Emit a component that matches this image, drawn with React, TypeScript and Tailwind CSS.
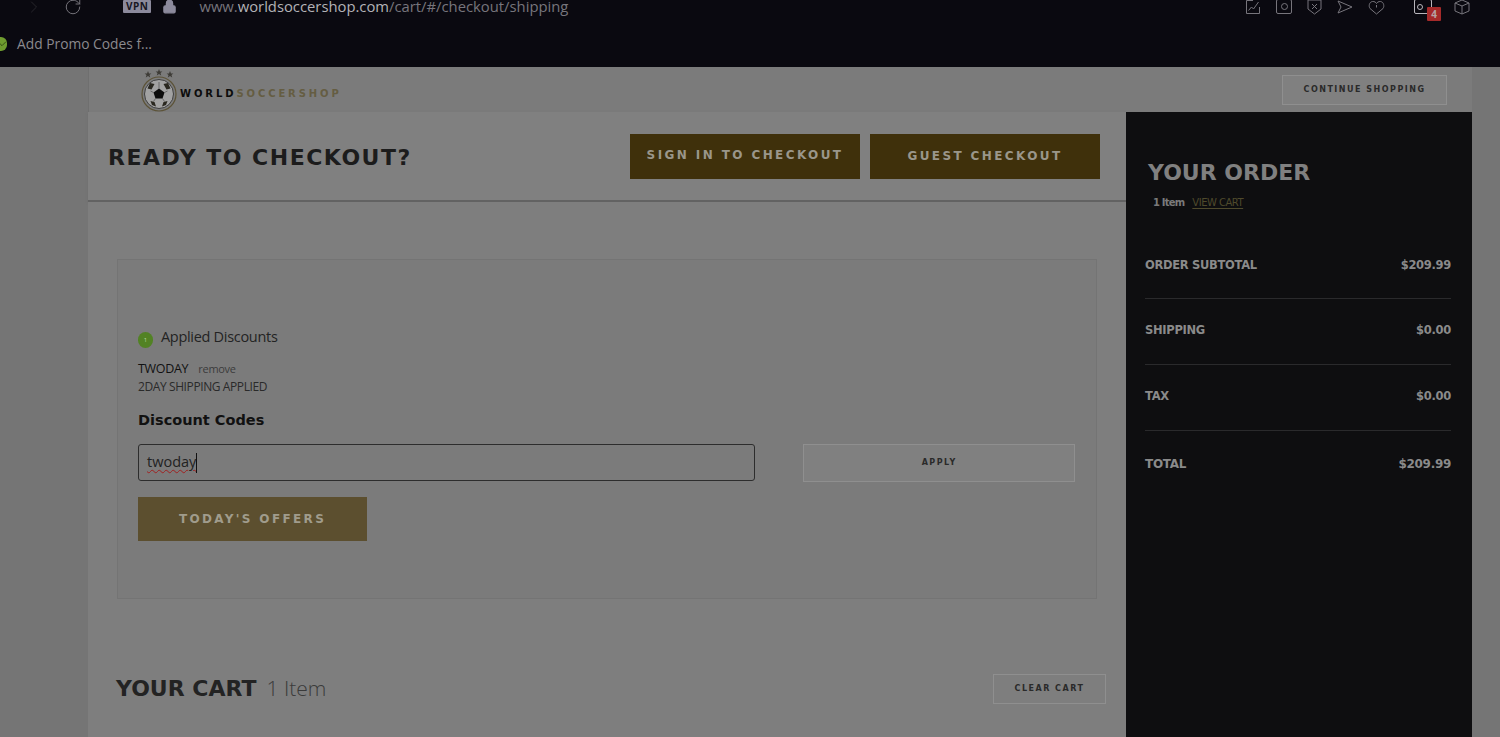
import { RotateCw, ChevronRight, Lock, Check } from "lucide-react";

const heading = "font-['DejaVu_Sans','Liberation_Sans',sans-serif]";

function Logo() {
  return (
    <svg width="38" height="44" viewBox="0 0 38 44" className="shrink-0">
      <g fill="#3d3b36">
        <path d="M7 3l1 2.400 2.400.2-1.900 1.500.7 2.400-2.200-1.400-2.200 1.400.7-2.400-1.900-1.500 2.400-.2z" />
        <path d="M18 1l1 2.400 2.400.2-1.900 1.500.7 2.400-2.200-1.400-2.200 1.400.7-2.400-1.900-1.500 2.400-.2z" />
        <path d="M29 3l1 2.400 2.400.2-1.900 1.500.7 2.400-2.200-1.400-2.200 1.400.7-2.400-1.900-1.500 2.400-.2z" />
      </g>
      <circle cx="18" cy="26" r="17" fill="#7b7b7b" stroke="#5c5338" strokeWidth="1.200" />
      <circle cx="18" cy="26" r="14.500" fill="#a2a2a2" stroke="#2a2a2a" strokeWidth="0.8" />
      <path d="M18 20.500l5.500 4-2 6h-7l-2-6z" fill="#0d0d0d" />
      <path d="M9 15l4.500 1-3 5.500-4-1zM27 15l-4.500 1 3 5.500 4-1zM9.500 33l4 1 1.500 4.500-4-1.500zM26.500 33l-4 1-1.500 4.500 4-1.500z" fill="#2a2820" />
      <path d="M18 20.500V14M12.500 24.500l-3-1.500M23.500 24.500l3-1.500M14.500 30.500l-2 3M21.500 30.500l2 3" stroke="#444" strokeWidth="0.6" />
    </svg>
  );
}

function Row({ label, value, large }: { label: string; value: string; large?: boolean }) {
  return (
    <div className={`flex justify-between ${large ? "text-[12px]" : "text-[11.500px]"} leading-4 font-bold tracking-[-0.3px] text-[#8a8a8a]`}>
      <span>{label}</span>
      <span>{value}</span>
    </div>
  );
}

export default function App() {
  return (
    <div className="h-[737px] overflow-hidden bg-[#757575] font-['Open_Sans',sans-serif]">
      {/* browser chrome */}
      <div className="h-[67px] bg-[#0a0910]">
        <div className="flex items-center h-[13px] text-[#77757c]">
          <ChevronRight size={20} strokeWidth={1} className="ml-6 text-[#2c2b31]" />
          <RotateCw size={18} strokeWidth={1.300} className="ml-[20px] text-[#77757c]" />
          <span className="ml-[41px] bg-[#8c8a9c] text-[#17151f] text-[10px] font-bold leading-[13px] px-[3px] rounded-[1px] tracking-[0.5px]">VPN</span>
          <Lock size={15} className="ml-[11px] text-[#8c8a9c]" fill="#8c8a9c" />
          <span className="ml-[22px] text-[14.800px] leading-[13px] whitespace-nowrap">
            www.<span className="text-[#b3b2b6]">worldsoccershop.com</span>/cart/#/checkout/shipping
          </span>
          <div className="ml-auto flex items-center text-[#77757c]">
            <svg width="16" height="16" viewBox="0 0 16 16" fill="none" stroke="currentColor" className="mr-[15px]"><path d="M8 1.500H1.500v13h13V8M3.500 11.500l3-3.500 2 2 5-7" /></svg>
            <span className="w-4 h-[15px] border border-current rounded-[2px] mr-[15px] flex items-center justify-center"><span className="w-[7px] h-[7px] rounded-full border border-current" /></span>
            <svg width="15" height="16" viewBox="0 0 15 16" fill="none" stroke="currentColor" className="mr-[15px]"><path d="M1 1h13v9l-6.500 5L1 10zM5 5l5 5M10 5l-5 5" /></svg>
            <svg width="16" height="14" viewBox="0 0 16 14" fill="none" stroke="currentColor" className="mr-[15px]"><path d="M1 1l14 6-14 6 3-6z" /></svg>
            <svg width="17" height="16" viewBox="0 0 17 16" fill="none" stroke="currentColor" className="mr-[29px]"><path d="M8.500 15L2 9.500C.5 7.500 1 3 4.500 2.500 6.500 2.300 8 3.500 8.500 4.500 9 3.500 10.500 2.300 12.500 2.500 16 3 16.500 7.500 15 9.500zM8.500 6v2.500" /></svg>
            <span className="relative w-[18px] h-[15px] border border-[#b8b6bc] rounded-[2px] mr-[22px]">
              <span className="absolute left-[2px] top-[4px] w-[6px] h-[6px] rounded-full border border-[#b8b6bc]" />
              <span className="absolute left-3 top-[7px] w-[14px] h-[14px] bg-[#a52a2a] rounded-[1px] text-[10px] leading-[14px] font-bold text-center text-[#b5a5a5]">4</span>
            </span>
            <svg width="16" height="16" viewBox="0 0 16 16" fill="none" stroke="currentColor" className="mr-[30px]"><path d="M8 1l7 3v8l-7 3-7-3V4zM1 4l7 3 7-3M8 7v8" /></svg>
          </div>
        </div>
        <div className="flex items-center mt-[22px]">
          <span className="-ml-[5px] w-3 h-[14px] rounded-full bg-[#6f9c2f] flex items-center justify-center"><Check size={8} className="text-[#1b2a0a] ml-1" /></span>
          <span className="ml-[10px] text-[13.800px] leading-[18px] text-[#8b8a8e]">Add Promo Codes f...</span>
        </div>
      </div>

      <div className="flex pl-[88px] pr-[28px]">
        {/* main column */}
        <div className="w-[1038px]">
          <div className="h-[45px] bg-[#7b7b7b] border-l border-[#6f6f6f] flex items-center pl-[52px]">
            <Logo />
            <span className={`${heading} ml-[1px] mt-[8px] text-[10px] font-bold tracking-[2.900px] text-[#0c0c0c]`}>
              WORLD<span className="text-[#655d42]">SOCCERSHOP</span>
            </span>
          </div>

          <div className="h-[90px] bg-[#808080] border-b-2 border-[#626262] flex items-center pl-5 pr-[26px] shadow-[0_1px_2px_#6c6c6c]">
            <h1 className={`${heading} mt-[3px] text-[22px] font-bold tracking-[1.500px] text-[#1c1c1c]`}>READY TO CHECKOUT?</h1>
            <button className={`${heading} ml-auto w-[230px] h-[45px] pb-[2px] bg-[#3f300b] text-[12px] font-bold tracking-[2.400px] text-[#9a968a]`}>SIGN IN TO CHECKOUT</button>
            <button className={`${heading} ml-[10px] w-[230px] h-[45px] bg-[#3f300b] text-[12px] font-bold tracking-[2.400px] text-[#9a968a]`}>GUEST CHECKOUT</button>
          </div>

          <div className="h-[535px] bg-[#7e7e7e]">
            <div className="pt-[57px] pl-[29px] pr-[29px]">
              <div className="h-[340px] border border-[#747474] bg-[#7b7b7b] pl-5 pr-[21px] pt-[67px]">
                <div className="flex items-start">
                  <span className="mt-[5px] w-[15px] h-[16px] rounded-full bg-[#528224] text-[6px] leading-[16px] text-center text-[#b8d8a0]">1</span>
                  <span className="ml-2 text-[14.500px] leading-[20px] tracking-[-0.3px] text-[#232323]">Applied Discounts</span>
                </div>
                <div className="mt-[13px] flex items-center h-4 text-[12.500px] tracking-[-0.3px] text-[#111]">
                  TWODAY<span className="ml-[10px] text-[11px] text-[#3c3c3c]">remove</span>
                </div>
                <div className="mt-[2px] text-[12px] leading-4 tracking-[-0.4px] text-[#2a2a2a]">2DAY SHIPPING APPLIED</div>
                <h2 className={`${heading} mt-[15px] text-[14.500px] leading-5 font-bold text-[#111]`}>Discount Codes</h2>
                <div className="mt-[14px] flex">
                  <div className="w-[618px] h-[37px] border border-[#2d2d2d] rounded-[3px] pl-2 text-[14.500px] leading-[34px] text-[#222]">
                    <span className="underline decoration-wavy decoration-[#a02020] decoration-1 underline-offset-2">twoday</span>
                    <span className="inline-block w-px h-[20px] bg-[#111] align-middle" />
                  </div>
                  <button className={`${heading} ml-[48px] w-[272px] h-[38px] border border-[#8f8f8f] bg-[#808080] text-[8px] font-bold tracking-[1.500px] text-[#2a2a2a]`}>APPLY</button>
                </div>
                <button className={`${heading} mt-[15px] block w-[229px] h-[44px] bg-[#5c4f2f] text-[12px] font-bold tracking-[2.350px] text-[#a09c8c]`}>TODAY'S OFFERS</button>
              </div>
            </div>
            <div className="flex items-center mt-[73px] pl-[28px] pr-[20px]">
              <h2 className={`${heading} text-[22px] font-bold text-[#232323]`}>YOUR CART</h2>
              <span className="ml-[10px] text-[21px] font-light text-[#3a3a3a]">1 Item</span>
              <button className={`${heading} ml-auto w-[113px] h-[30px] border border-[#8f8f8f] bg-[#7e7e7e] text-[8px] font-bold tracking-[1.500px] text-[#2a2a2a]`}>CLEAR CART</button>
            </div>
          </div>
        </div>

        {/* order panel, it starts lower than the site header */}
        <div className="w-[346px]">
          <div className="h-[45px] bg-[#7b7b7b] flex items-center justify-end pr-[25px]">
            <button className={`${heading} w-[165px] h-[30px] border border-[#8f8f8f] bg-[#808080] text-[8px] font-bold tracking-[1.500px] text-[#2a2a2a]`}>CONTINUE SHOPPING</button>
          </div>
          <div className={`${heading} h-[625px] bg-[#0e0e10] pl-[19px] pr-[21px] pt-[46px]`}>
            <h2 className="ml-[3px] text-[22px] leading-[30px] font-bold text-[#808080]">YOUR ORDER</h2>
            <div className="ml-2 mt-[7px] text-[10px] font-bold tracking-[-0.8px] text-[#7a7a7a] leading-4">
              1 Item<span className="ml-[8px] font-normal tracking-[-0.5px] text-[#4f4a2c] underline underline-offset-2">VIEW CART</span>
            </div>
            <div className="mt-[46px] border-b border-[#2a2a2c] pb-[25px]"><Row label="ORDER SUBTOTAL" value="$209.99" /></div>
            <div className="mt-[23px] border-b border-[#2a2a2c] pb-[26px]"><Row label="SHIPPING" value="$0.00" /></div>
            <div className="mt-[23px] border-b border-[#2a2a2c] pb-[26px]"><Row label="TAX" value="$0.00" /></div>
            <div className="mt-[25px]"><Row label="TOTAL" value="$209.99" large /></div>
          </div>
        </div>
      </div>
    </div>
  );
}
